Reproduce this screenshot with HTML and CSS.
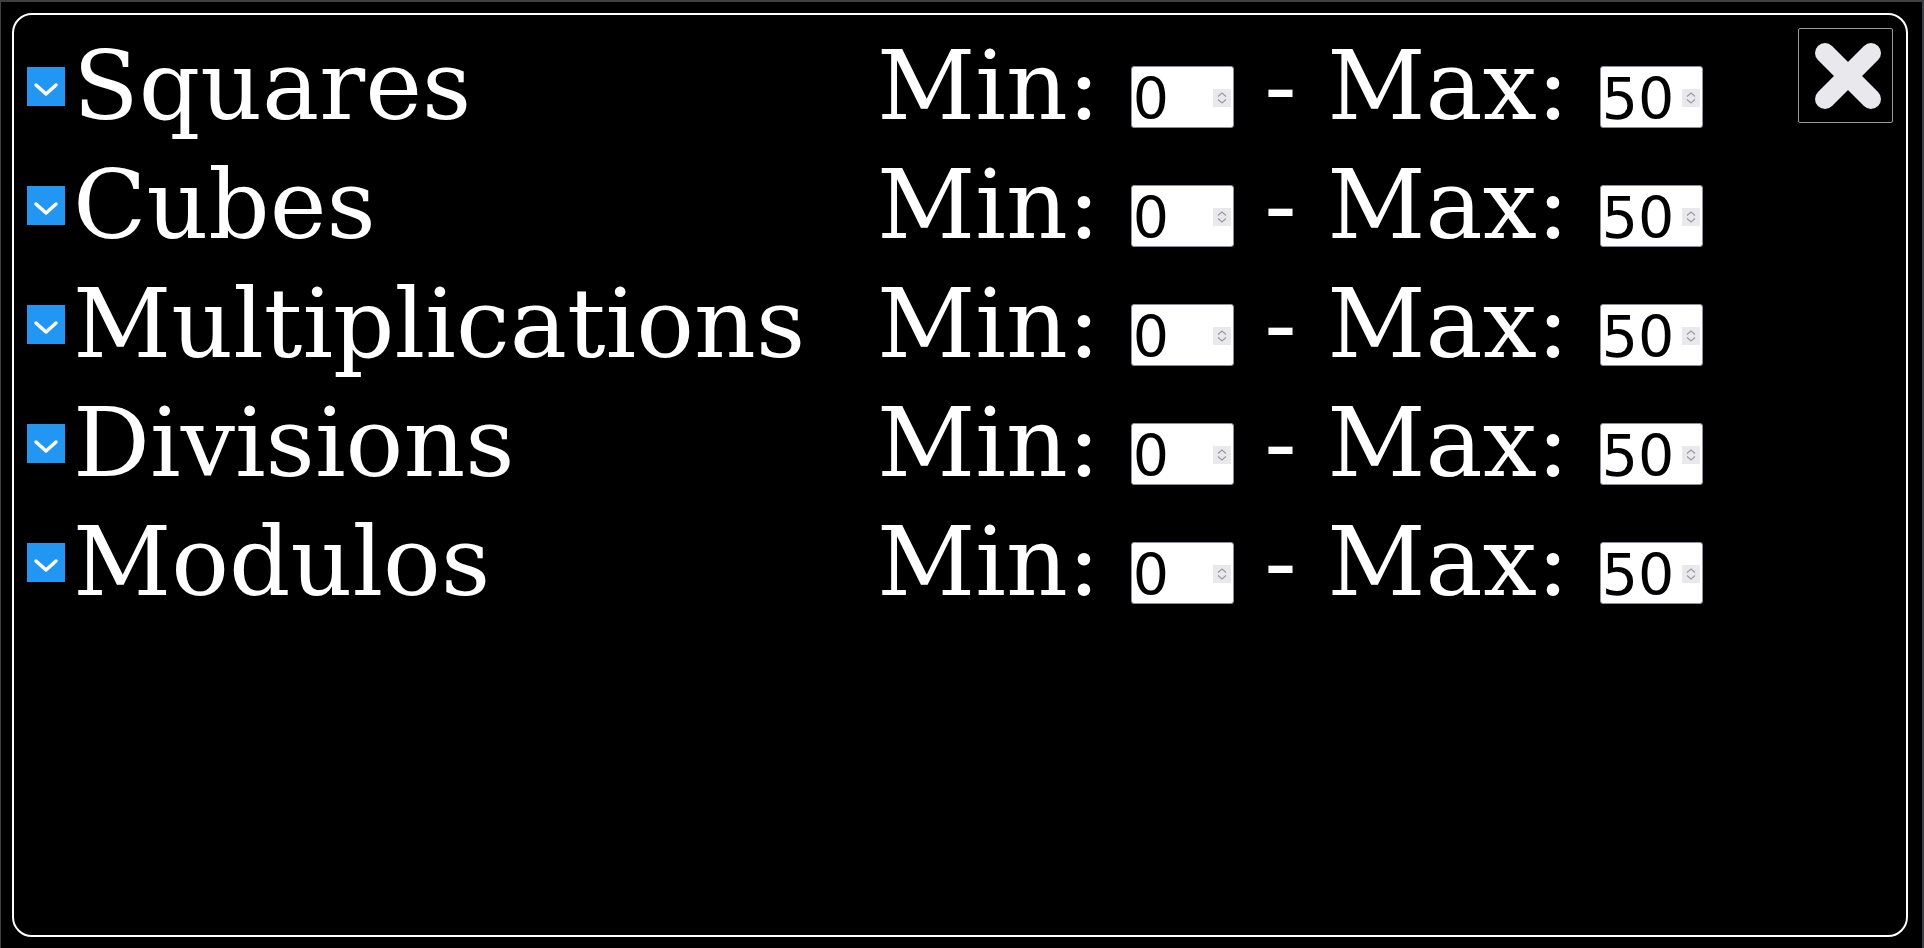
FILE: index.html
```html
<!DOCTYPE html>
<html>
<head>
<meta charset="utf-8">
<link rel="stylesheet" href="styles.css">
</head>
<body>
<div class="panel">
  <div class="rows">
    <div class="row">
      <span class="check"><svg viewBox="0 0 38 39" width="38" height="39"><polyline points="9,18 19,27 29,18" fill="none" stroke="#fff" stroke-width="3.5" stroke-linecap="round" stroke-linejoin="round"/></svg></span>
      <span class="label">Squares</span>
      <span class="range">Min: <span class="num"><span class="val">0</span><svg class="spin" viewBox="0 0 18 18" width="18" height="18"><rect width="18" height="18" fill="#e9e9ed"/><polyline points="5,7.5 9,4 13,7.5" fill="none" stroke="#9a9aa6" stroke-width="1.2"/><polyline points="5,10.5 9,14 13,10.5" fill="none" stroke="#9a9aa6" stroke-width="1.2"/></svg></span> - Max: <span class="num"><span class="val">50</span><svg class="spin" viewBox="0 0 18 18" width="18" height="18"><rect width="18" height="18" fill="#e9e9ed"/><polyline points="5,7.5 9,4 13,7.5" fill="none" stroke="#9a9aa6" stroke-width="1.2"/><polyline points="5,10.5 9,14 13,10.5" fill="none" stroke="#9a9aa6" stroke-width="1.2"/></svg></span></span>
    </div>
    <div class="row">
      <span class="check"><svg viewBox="0 0 38 39" width="38" height="39"><polyline points="9,18 19,27 29,18" fill="none" stroke="#fff" stroke-width="3.5" stroke-linecap="round" stroke-linejoin="round"/></svg></span>
      <span class="label">Cubes</span>
      <span class="range">Min: <span class="num"><span class="val">0</span><svg class="spin" viewBox="0 0 18 18" width="18" height="18"><rect width="18" height="18" fill="#e9e9ed"/><polyline points="5,7.5 9,4 13,7.5" fill="none" stroke="#9a9aa6" stroke-width="1.2"/><polyline points="5,10.5 9,14 13,10.5" fill="none" stroke="#9a9aa6" stroke-width="1.2"/></svg></span> - Max: <span class="num"><span class="val">50</span><svg class="spin" viewBox="0 0 18 18" width="18" height="18"><rect width="18" height="18" fill="#e9e9ed"/><polyline points="5,7.5 9,4 13,7.5" fill="none" stroke="#9a9aa6" stroke-width="1.2"/><polyline points="5,10.5 9,14 13,10.5" fill="none" stroke="#9a9aa6" stroke-width="1.2"/></svg></span></span>
    </div>
    <div class="row">
      <span class="check"><svg viewBox="0 0 38 39" width="38" height="39"><polyline points="9,18 19,27 29,18" fill="none" stroke="#fff" stroke-width="3.5" stroke-linecap="round" stroke-linejoin="round"/></svg></span>
      <span class="label">Multiplications</span>
      <span class="range">Min: <span class="num"><span class="val">0</span><svg class="spin" viewBox="0 0 18 18" width="18" height="18"><rect width="18" height="18" fill="#e9e9ed"/><polyline points="5,7.5 9,4 13,7.5" fill="none" stroke="#9a9aa6" stroke-width="1.2"/><polyline points="5,10.5 9,14 13,10.5" fill="none" stroke="#9a9aa6" stroke-width="1.2"/></svg></span> - Max: <span class="num"><span class="val">50</span><svg class="spin" viewBox="0 0 18 18" width="18" height="18"><rect width="18" height="18" fill="#e9e9ed"/><polyline points="5,7.5 9,4 13,7.5" fill="none" stroke="#9a9aa6" stroke-width="1.2"/><polyline points="5,10.5 9,14 13,10.5" fill="none" stroke="#9a9aa6" stroke-width="1.2"/></svg></span></span>
    </div>
    <div class="row">
      <span class="check"><svg viewBox="0 0 38 39" width="38" height="39"><polyline points="9,18 19,27 29,18" fill="none" stroke="#fff" stroke-width="3.5" stroke-linecap="round" stroke-linejoin="round"/></svg></span>
      <span class="label">Divisions</span>
      <span class="range">Min: <span class="num"><span class="val">0</span><svg class="spin" viewBox="0 0 18 18" width="18" height="18"><rect width="18" height="18" fill="#e9e9ed"/><polyline points="5,7.5 9,4 13,7.5" fill="none" stroke="#9a9aa6" stroke-width="1.2"/><polyline points="5,10.5 9,14 13,10.5" fill="none" stroke="#9a9aa6" stroke-width="1.2"/></svg></span> - Max: <span class="num"><span class="val">50</span><svg class="spin" viewBox="0 0 18 18" width="18" height="18"><rect width="18" height="18" fill="#e9e9ed"/><polyline points="5,7.5 9,4 13,7.5" fill="none" stroke="#9a9aa6" stroke-width="1.2"/><polyline points="5,10.5 9,14 13,10.5" fill="none" stroke="#9a9aa6" stroke-width="1.2"/></svg></span></span>
    </div>
    <div class="row">
      <span class="check"><svg viewBox="0 0 38 39" width="38" height="39"><polyline points="9,18 19,27 29,18" fill="none" stroke="#fff" stroke-width="3.5" stroke-linecap="round" stroke-linejoin="round"/></svg></span>
      <span class="label">Modulos</span>
      <span class="range">Min: <span class="num"><span class="val">0</span><svg class="spin" viewBox="0 0 18 18" width="18" height="18"><rect width="18" height="18" fill="#e9e9ed"/><polyline points="5,7.5 9,4 13,7.5" fill="none" stroke="#9a9aa6" stroke-width="1.2"/><polyline points="5,10.5 9,14 13,10.5" fill="none" stroke="#9a9aa6" stroke-width="1.2"/></svg></span> - Max: <span class="num"><span class="val">50</span><svg class="spin" viewBox="0 0 18 18" width="18" height="18"><rect width="18" height="18" fill="#e9e9ed"/><polyline points="5,7.5 9,4 13,7.5" fill="none" stroke="#9a9aa6" stroke-width="1.2"/><polyline points="5,10.5 9,14 13,10.5" fill="none" stroke="#9a9aa6" stroke-width="1.2"/></svg></span></span>
    </div>
  </div>
  <div class="close"><svg viewBox="0 0 93 93" width="93" height="93"><line x1="26" y1="24" x2="72" y2="70" stroke="#e8e8ed" stroke-width="20" stroke-linecap="round"/><line x1="72" y1="24" x2="26" y2="70" stroke="#e8e8ed" stroke-width="20" stroke-linecap="round"/></svg></div>
</div>
</body>
</html>
```
FILE: styles.css
```css
html {
  background: #3e4143;
}
body {
  margin: 2px 2px 0 1px;
  height: 946px;
  background: #000;
  color: #fff;
  font-family: "DejaVu Serif", serif;
  font-size: 96px;
}
.panel {
  box-sizing: border-box;
  margin: 11px 0 0 11px;
  width: 1896px;
  height: 924px;
  border: 2px solid #fff;
  border-radius: 20px;
  display: flex;
  align-items: flex-start;
}
.rows {
  flex: 1;
  padding-top: 12px;
}
.row {
  display: flex;
  align-items: flex-start;
  height: 119px;
  line-height: 119px;
  white-space: nowrap;
}
.check {
  flex: none;
  width: 38px;
  height: 39px;
  margin: 40px 8px 0 13px;
  background: #2196f3;
  line-height: 0;
}
.label {
  flex: none;
  width: 804px;
}
.range {
  flex: none;
}
.num {
  display: inline-flex;
  align-items: flex-start;
  vertical-align: top;
  box-sizing: border-box;
  margin-top: 39px;
  width: 103px;
  height: 62px;
  background: #fff;
  border: 1px solid #8f8f9d;
  border-radius: 3px;
  color: #000;
  font-family: "DejaVu Sans", sans-serif;
  font-size: 57px;
  line-height: 60px;
}
.val {
  flex: 1;
  padding: 2px 0 0 1px;
}
.spin {
  flex: none;
  margin: 22px 2px 0 0;
}
.close {
  flex: none;
  width: 93px;
  height: 93px;
  margin: 13px 13px 0 0;
  border: 1px solid #9a9a9a;
  border-radius: 2px;
  line-height: 0;
}
```
